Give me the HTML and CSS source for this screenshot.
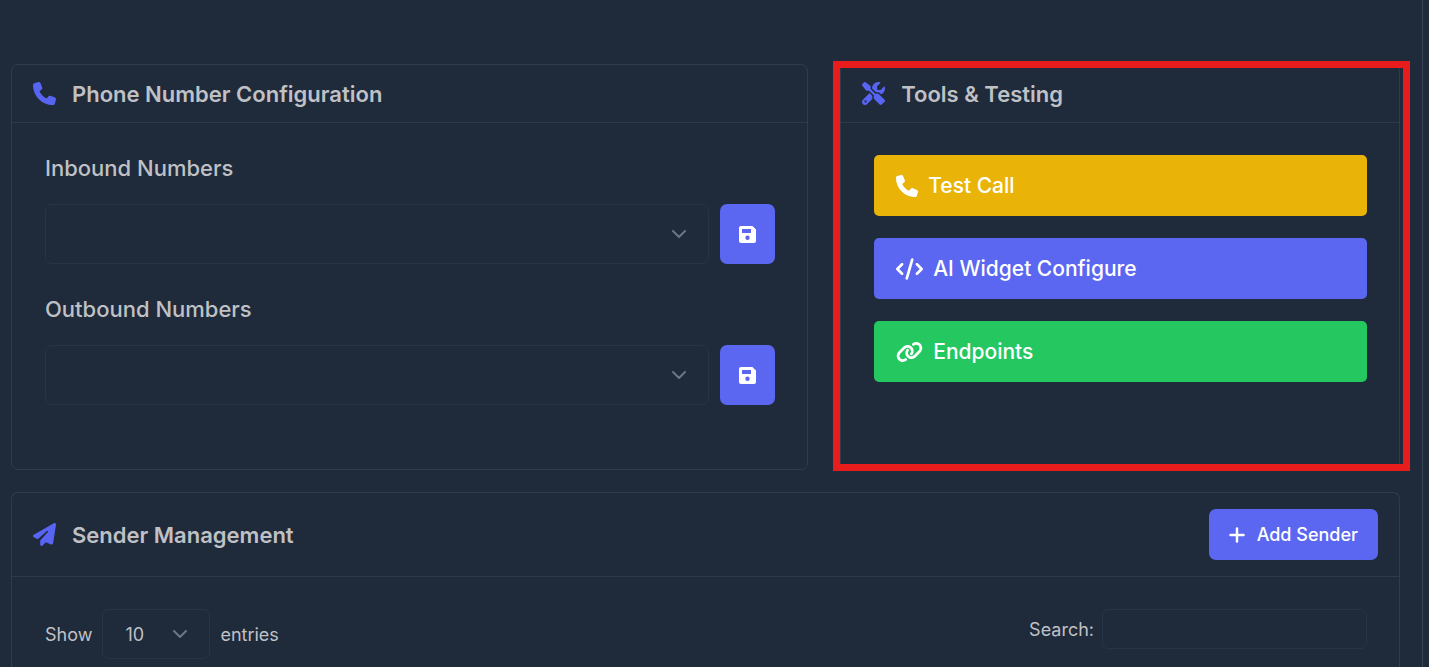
FILE: index.html
```html
<!DOCTYPE html>
<html lang="en">
<head>
<meta charset="utf-8">
<meta name="viewport" content="width=device-width, initial-scale=1">
<title>Phone Number Configuration</title>
<link rel="stylesheet" href="styles.css">
</head>
<body>
<svg class="sprite" aria-hidden="true">
  <symbol id="phone" viewBox="0 0 512 512"><path d="M164.9 24.6c-7.7-18.6-28-28.5-47.4-23.2l-88 24C12.1 30.2 0 46 0 64C0 311.4 200.6 512 448 512c18 0 33.8-12.1 38.6-29.5l24-88c5.3-19.4-4.6-39.7-23.2-47.4l-96-40c-16.3-6.8-35.2-2.1-46.3 11.6L304.7 368C234.3 334.7 177.3 277.7 144 207.3L193.3 167c13.7-11.2 18.4-30 11.6-46.3l-40-96z"/></symbol>
  <symbol id="tools" viewBox="0 0 512 512"><path d="M78.6 5C69.1-2.4 55.6-1.5 47 7L7 47c-8.5 8.5-9.4 22-2.1 31.6l80 104c4.5 5.9 11.6 9.4 19 9.4h54.1l109 109c-14.7 29-10 65.4 14.3 89.6l112 112c12.5 12.5 32.8 12.5 45.3 0l64-64c12.5-12.5 12.5-32.8 0-45.3l-112-112c-24.2-24.2-60.6-29-89.6-14.3l-109-109V104c0-7.5-3.5-14.5-9.4-19L78.6 5zM19.9 396.1C7.2 408.8 0 426.1 0 444.1C0 481.6 30.4 512 67.9 512c18 0 35.3-7.2 48-19.9L233.7 374.3c-7.8-20.9-9-43.6-3.6-65.1l-61.7-61.7L19.9 396.1zM512 144c0-10.5-1.1-20.7-3.2-30.5c-2.4-11.2-16.1-14.1-24.2-6l-63.9 63.9c-3 3-7.1 4.7-11.3 4.7H352c-8.8 0-16-7.2-16-16V102.6c0-4.2 1.7-8.3 4.7-11.3l63.9-63.9c8.1-8.1 5.2-21.8-6-24.2C388.7 1.1 378.5 0 368 0C288.5 0 224 64.5 224 144l0 .8 85.3 85.3c36-9.1 75.8 .5 104 28.7L429 274.5c49-23 83-72.8 83-130.5zM56 432a24 24 0 1 1 48 0 24 24 0 1 1 -48 0z"/></symbol>
  <symbol id="code" viewBox="0 0 640 512"><path d="M392.8 1.2c-17-4.9-34.7 5-39.6 22l-128 448c-4.9 17 5 34.7 22 39.6s34.7-5 39.6-22l128-448c4.9-17-5-34.7-22-39.6zm80.6 120.1c-12.5 12.5-12.5 32.8 0 45.3L562.7 256l-89.4 89.4c-12.5 12.5-12.5 32.8 0 45.3s32.8 12.5 45.3 0l112-112c12.5-12.5 12.5-32.8 0-45.3l-112-112c-12.5-12.5-32.8-12.5-45.3 0zm-306.7 0c-12.5-12.5-32.8-12.5-45.3 0l-112 112c-12.5 12.5-12.5 32.8 0 45.3l112 112c12.5 12.5 32.8 12.5 45.3 0s12.5-32.8 0-45.3L77.3 256l89.4-89.4c12.5-12.5 12.5-32.8 0-45.3z"/></symbol>
  <symbol id="link" viewBox="0 0 640 512"><path d="M579.8 267.7c56.5-56.5 56.5-148 0-204.5c-50-50-128.8-56.5-186.3-15.4l-1.6 1.1c-14.4 10.3-17.7 30.3-7.4 44.6s30.3 17.7 44.6 7.4l1.6-1.1c32.1-22.9 76-19.3 103.8 8.6c31.5 31.5 31.5 82.5 0 114L422.3 334.8c-31.5 31.5-82.5 31.5-114 0c-27.9-27.9-31.5-71.8-8.6-103.8l1.1-1.6c10.3-14.4 6.9-34.4-7.4-44.6s-34.4-6.9-44.6 7.4l-1.1 1.6C206.5 251.2 213 330 263 380c56.5 56.5 148 56.5 204.5 0L579.8 267.7zM60.2 244.3c-56.5 56.5-56.5 148 0 204.5c50 50 128.8 56.5 186.3 15.4l1.6-1.1c14.4-10.3 17.7-30.3 7.4-44.6s-30.3-17.7-44.6-7.4l-1.6 1.1c-32.1 22.9-76 19.3-103.8-8.6C74 372 74 321 105.5 289.5L217.7 177.2c31.5-31.5 82.5-31.5 114 0c27.9 27.9 31.5 71.8 8.6 103.9l-1.1 1.6c-10.3 14.4-6.9 34.4 7.4 44.6s34.4 6.9 44.6-7.4l1.1-1.6C433.5 260.8 427 182 377 132c-56.5-56.5-148-56.5-204.5 0L60.2 244.3z"/></symbol>
  <symbol id="plane" viewBox="0 0 512 512"><path d="M498.1 5.6c10.1 7 15.4 19.1 13.5 31.2l-64 416c-1.5 9.7-7.4 18.2-16 23s-18.9 5.4-28 1.6L284 427.7l-68.5 74.1c-8.9 9.7-22.9 12.9-35.2 8.1S160 493.2 160 480V396.4c0-4 1.5-7.8 4.2-10.7L331.8 202.8c5.8-6.3 5.6-16-.4-22s-15.7-6.4-22-.7L106 360.8 17.7 316.6C7.1 311.3 .3 300.7 0 288.9s5.9-22.8 16.1-28.7l448-256c10.7-6.1 23.9-5.5 34 1.4z"/></symbol>
  <symbol id="save" viewBox="0 0 17 17"><path fill-rule="evenodd" d="M2 0h11.5L17 3.500V15a2 2 0 0 1-2 2H2a2 2 0 0 1-2-2V2a2 2 0 0 1 2-2zM3 3v4h9V3zM8.500 9.500a2.200 2.200 0 1 0 0 4.400 2.200 2.200 0 0 0 0-4.400z"/></symbol>
  <symbol id="plus" viewBox="0 0 16 16"><path d="M8 1.500v13M1.500 8h13" fill="none" stroke="currentColor" stroke-width="2.500" stroke-linecap="round"/></symbol>
  <symbol id="chevron" viewBox="0 0 14 8"><path d="M1 1l6 6 6-6" fill="none" stroke="currentColor" stroke-width="2" stroke-linecap="round" stroke-linejoin="round"/></symbol>
</svg>
<main class="page">
  <div class="row">
    <section class="card">
      <header class="card-header">
        <svg class="icon"><use href="#phone"/></svg>
        <h2>Phone Number Configuration</h2>
      </header>
      <div class="card-body">
        <div class="field">
          <label for="inbound">Inbound Numbers</label>
          <div class="control-row">
            <div class="select"><select id="inbound"><option></option></select><svg class="chevron"><use href="#chevron"/></svg></div>
            <button class="btn-save" type="button" aria-label="Save inbound numbers"><svg><use href="#save"/></svg></button>
          </div>
        </div>
        <div class="field">
          <label for="outbound">Outbound Numbers</label>
          <div class="control-row">
            <div class="select"><select id="outbound"><option></option></select><svg class="chevron"><use href="#chevron"/></svg></div>
            <button class="btn-save" type="button" aria-label="Save outbound numbers"><svg><use href="#save"/></svg></button>
          </div>
        </div>
      </div>
    </section>
    <section class="card highlighted">
      <header class="card-header">
        <svg class="icon"><use href="#tools"/></svg>
        <h2>Tools &amp; Testing</h2>
      </header>
      <div class="card-body tools">
        <button class="tool tool-call" type="button"><svg class="icon"><use href="#phone"/></svg>Test Call</button>
        <button class="tool tool-widget" type="button"><svg class="icon wide"><use href="#code"/></svg>AI Widget Configure</button>
        <button class="tool tool-endpoints" type="button"><svg class="icon wide"><use href="#link"/></svg>Endpoints</button>
      </div>
    </section>
  </div>
  <section class="card senders">
    <header class="card-header">
      <svg class="icon"><use href="#plane"/></svg>
      <h2>Sender Management</h2>
      <button class="btn-add" type="button"><svg><use href="#plus"/></svg>Add Sender</button>
    </header>
    <div class="card-body table-controls">
      <label class="length">Show
        <span class="select small"><select><option>10</option><option>25</option><option>50</option></select><svg class="chevron"><use href="#chevron"/></svg></span>
        entries</label>
      <label class="search">Search:<input type="search"></label>
    </div>
  </section>
</main>
</body>
</html>
```
FILE: styles.css
```css
* {
  box-sizing: border-box;
}

body {
  margin: 0;
  background: #1f2a3b;
  color: #bfc1c5;
  font-family: Inter, "Liberation Sans", sans-serif;
  font-size: 18px;
}

.sprite {
  display: none;
}

svg {
  fill: currentColor;
  flex: none;
}

button,
select,
input {
  font: inherit;
  color: inherit;
}

button {
  border: 0;
  color: #fff;
  cursor: pointer;
}

.page {
  display: flex;
  flex-direction: column;
  gap: 22px;
  min-height: 100vh;
  margin-right: 6px;
  padding: 64px 22px 0 11px;
  border-right: 1px solid #374252;
}

.row {
  display: grid;
  grid-template-columns: 47fr 33fr;
  gap: 32px;
}

.card {
  border: 1px solid #303c4b;
  border-radius: 7px;
}

.card-header {
  display: flex;
  align-items: center;
  gap: 16px;
  min-height: 58px;
  padding: 0 21px;
  border-bottom: 1px solid #2e3a49;
}

.card-header h2 {
  margin: 0;
  font-size: 22px;
  font-weight: 600;
  line-height: 26px;
}

.icon {
  width: 23px;
  height: 23px;
}

.card-header .icon {
  color: #5865f2;
}

.card-body {
  padding: 32px 32px 32px 33px;
}

.field {
  margin-bottom: 32px;
}

.field label {
  display: block;
  margin-bottom: 23px;
  font-size: 22px;
  font-weight: 500;
  line-height: 26px;
}

.control-row {
  display: flex;
  gap: 11px;
}

.select {
  position: relative;
  flex: 1;
}

.select select {
  display: block;
  width: 100%;
  height: 60px;
  padding: 0 22px;
  border: 1px solid #283444;
  border-radius: 7px;
  background: transparent;
  appearance: none;
}

.chevron {
  position: absolute;
  top: calc(50% - 4px);
  right: 23px;
  width: 14px;
  height: 8px;
  color: #6c7582;
  pointer-events: none;
}

.btn-save {
  display: grid;
  place-items: center;
  width: 55px;
  border-radius: 7px;
  background: #5b67f1;
}

.btn-save svg {
  width: 17px;
  height: 17px;
}

.highlighted {
  position: relative;
}

.highlighted::after {
  content: "";
  position: absolute;
  inset: -4px -11px -2px -8px;
  border: 7px solid #e81c1c;
  pointer-events: none;
}

.tools {
  display: flex;
  flex-direction: column;
  gap: 22px;
}

.tool {
  display: flex;
  align-items: center;
  gap: 10px;
  height: 61px;
  padding: 0 22px;
  border-radius: 5px;
  font-size: 21px;
  font-weight: 500;
}

.tool .icon {
  height: 22px;
  width: 22px;
}

.tool .wide {
  width: 27px;
}

.tool-call {
  background: #eab308;
}

.tool-widget {
  background: #5b67f1;
}

.tool-endpoints {
  background: #24c760;
}

.senders {
  flex: 1;
  border-bottom: 0;
  border-radius: 7px 7px 0 0;
}

.senders .card-header {
  padding: 16px 21px;
}

.btn-add {
  display: flex;
  align-items: center;
  gap: 12px;
  height: 51px;
  margin-left: auto;
  padding: 0 20px;
  border-radius: 7px;
  background: #5b67f1;
  font-size: 18px;
  font-weight: 500;
}

.btn-add svg {
  width: 16px;
  height: 16px;
}

.table-controls {
  display: flex;
  align-items: flex-start;
  justify-content: space-between;
  padding-bottom: 0;
}

.length,
.search {
  display: flex;
  align-items: center;
}

.length {
  gap: 10px;
}

.small {
  width: 108px;
}

.small select {
  height: 50px;
  border-radius: 6px;
}

.search {
  gap: 8px;
}

.search input {
  width: 265px;
  height: 40px;
  padding: 0 12px;
  border: 1px solid #283444;
  border-radius: 6px;
  background: transparent;
}
```
